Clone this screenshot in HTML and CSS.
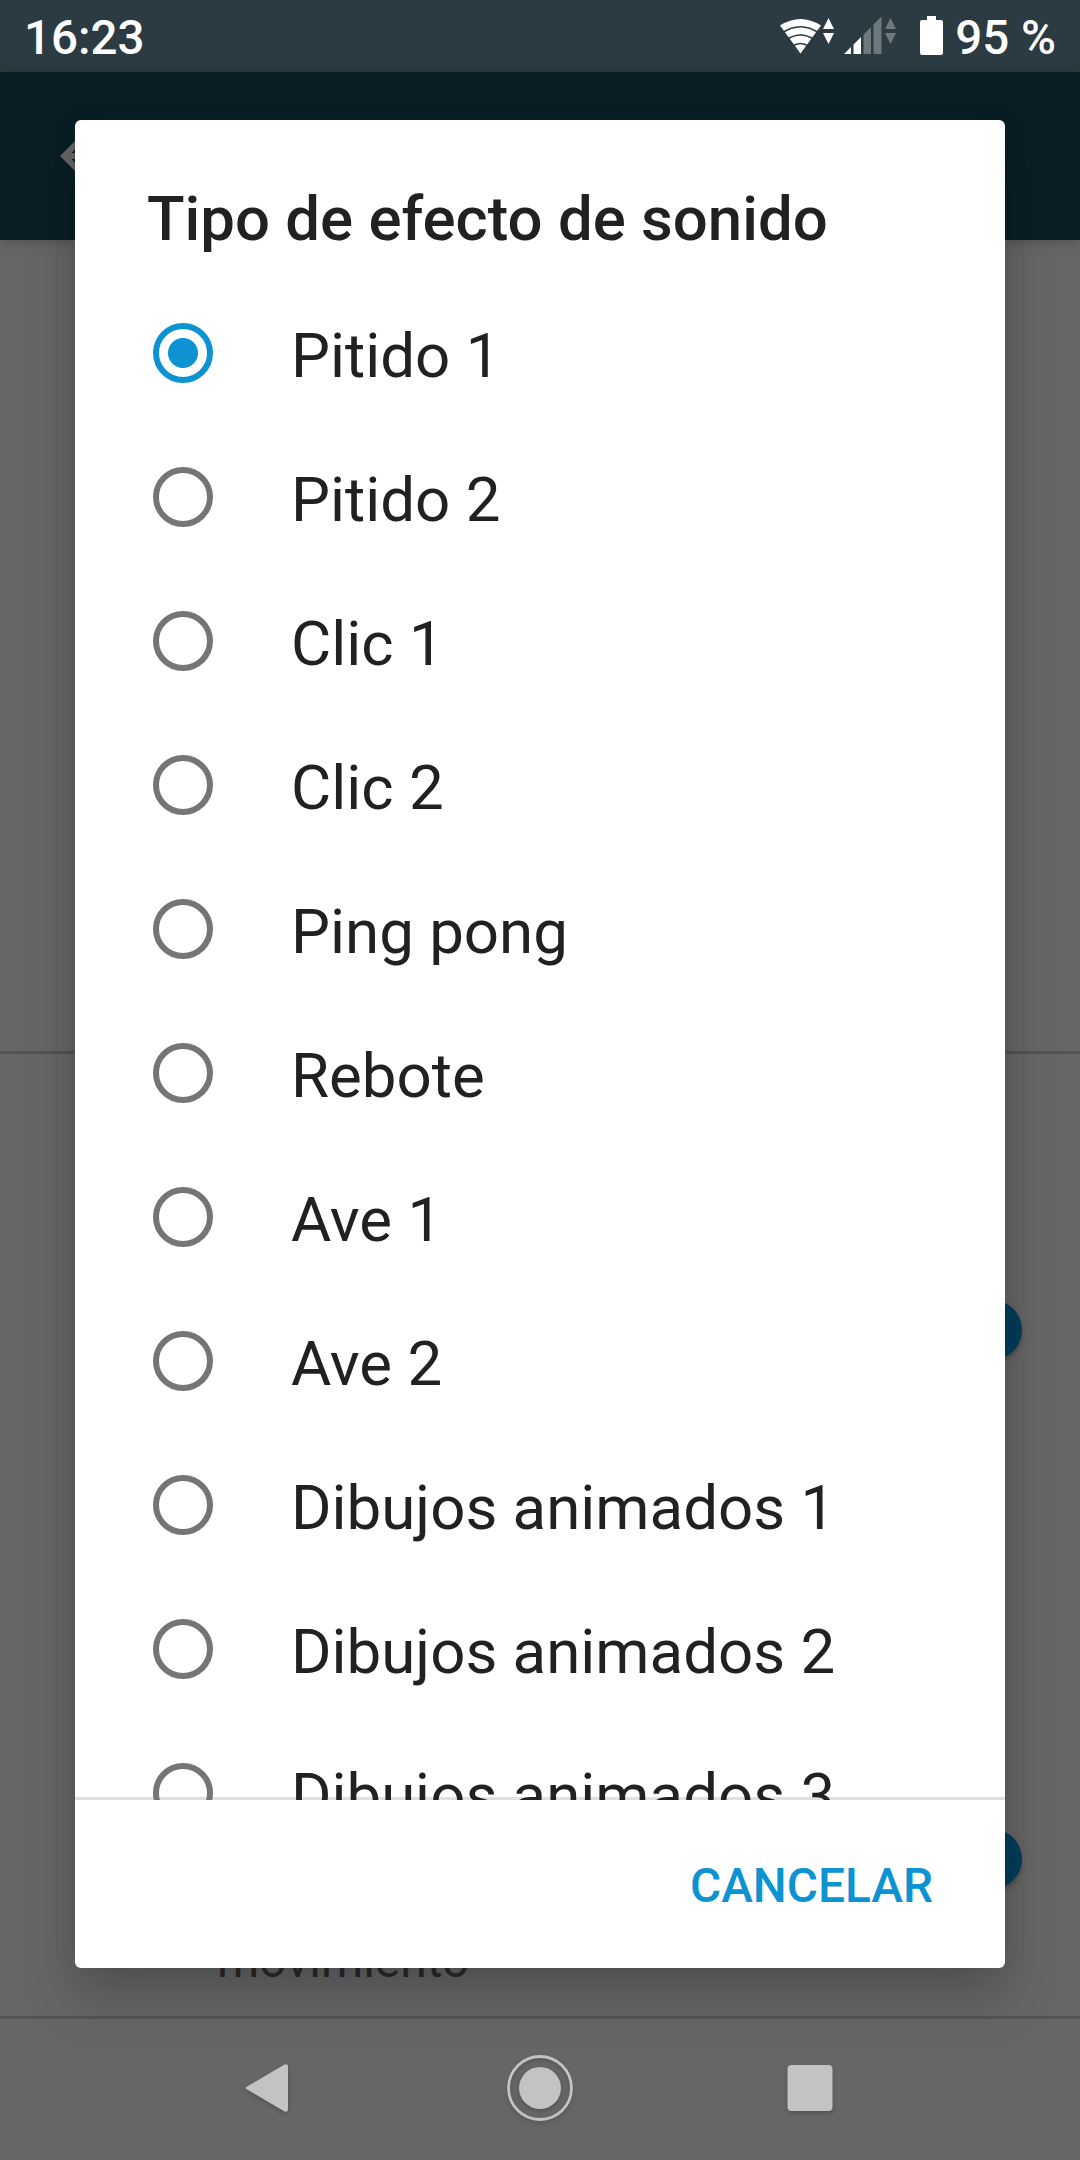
FILE: index.html
```html
<!DOCTYPE html>
<html lang="es">
<head>
<meta charset="utf-8">
<title>Tipo de efecto de sonido</title>
<link rel="stylesheet" href="styles.css">
</head>
<body>
<div class="screen">
  <header class="status">
    <span class="clock">16:23</span>
    <svg class="status-icons" width="164" height="72" viewBox="780 0 164 72">
      <path d="M780 25.500Q800.500 12.500 821 25.500L800.500 53.500Z" fill="#fff"/>
      <g fill="none" stroke="#2b3b41" stroke-width="1.700">
        <path d="M782 33Q800.500 20.500 819 33"/>
        <path d="M787 39.500Q800.500 30.500 814 39.500"/>
        <path d="M792 46.500Q800.500 40.500 809 46.500"/>
      </g>
      <path d="M828.500 18l5.500 11h-11zM828.500 44l5.500-11h-11z" fill="#fff"/>
      <path d="M844 54l7-7v7zM853.500 54v-9.500l7.500-7.500v17z" fill="#fff"/>
      <path d="M863.500 54v-19.500l7.500-7.500v27zM873.500 54v-29.500l8-8v37.500zM890.500 18l5.500 11h-11zM890.500 44l5.500-11h-11z" fill="#6d787c"/>
      <path d="M927 16h9v4h5q2 0 2 2v31q0 2-2 2h-19q-2 0-2-2v-31q0-2 2-2h5z" fill="#fff"/>
    </svg>
    <span class="battery">95 %</span>
  </header>
  <div class="toolbar">
    <svg width="72" height="72" viewBox="0 0 24 24"><path d="M20 11H7.830l5.590-5.590L12 4l-8 8 8 8 1.410-1.410L7.830 13H20z" fill="#666"/></svg>
  </div>
  <main class="settings">
    <section class="group preview"></section>
    <section class="group options">
      <div class="option"><i class="thumb"></i></div>
      <div class="option last"><i class="thumb"></i></div>
      <p class="summary">movimiento</p>
    </section>
  </main>
  <nav class="nav">
    <svg width="1080" height="141" viewBox="0 2019 1080 141" fill="#c3c3c3">
      <path d="M248 2086L284.500 2064.600Q288 2063 288 2067V2109Q288 2113 284.500 2111.400L248 2090Q243.500 2088 248 2086Z"/>
      <circle cx="540" cy="2088" r="21"/>
      <circle cx="540" cy="2088" r="31.500" fill="none" stroke="#c3c3c3" stroke-width="2.800"/>
      <rect x="787.500" y="2065" width="45" height="46" rx="4"/>
    </svg>
  </nav>
  <div class="dialog">
    <h1 class="title">Tipo de efecto de sonido</h1>
    <div class="list">
      <div class="item"><i class="radio on"></i><span>Pitido 1</span></div>
      <div class="item"><i class="radio"></i><span>Pitido 2</span></div>
      <div class="item"><i class="radio"></i><span>Clic 1</span></div>
      <div class="item"><i class="radio"></i><span>Clic 2</span></div>
      <div class="item"><i class="radio"></i><span>Ping pong</span></div>
      <div class="item"><i class="radio"></i><span>Rebote</span></div>
      <div class="item"><i class="radio"></i><span>Ave 1</span></div>
      <div class="item"><i class="radio"></i><span>Ave 2</span></div>
      <div class="item"><i class="radio"></i><span>Dibujos animados 1</span></div>
      <div class="item"><i class="radio"></i><span>Dibujos animados 2</span></div>
      <div class="item"><i class="radio"></i><span>Dibujos animados 3</span></div>
    </div>
    <div class="actions"><span class="cancel">CANCELAR</span></div>
  </div>
</div>
</body>
</html>
```
FILE: styles.css
```css
* { box-sizing: border-box; }
body { margin: 0; font-family: Roboto, sans-serif; }
.screen { position: relative; width: 1080px; height: 2160px; overflow: hidden; display: flex; flex-direction: column; background: #666; }
.status { height: 72px; flex: none; display: flex; align-items: center; padding: 0 24px 0 24px; background: #2b3b41; color: #fff; font-size: 47.5px; font-weight: 500; line-height: 70px; white-space: nowrap; }
.clock, .battery { padding-top: 3px; }
.status-icons { margin-left: auto; margin-right: 11px; }
.toolbar { height: 168px; flex: none; padding: 48px; background: #091f25; box-shadow: 0 2px 12px rgba(0,0,0,.2); }
.settings { height: 1779px; flex: none; display: flex; flex-direction: column; }
.group { border-bottom: 3px solid #545454; }
.preview { height: 814px; }
.options { flex: 1; padding: 246px 58px 0 217px; }
.option { display: flex; justify-content: flex-end; height: 529px; }
.option.last { height: 60px; }
.thumb { width: 60px; height: 60px; border-radius: 50%; background: #003d5c; box-shadow: 0 3px 5px rgba(0,0,0,.25); }
.summary { margin: 42px 0 0; font-size: 48px; line-height: 60px; color: #292929; }
.nav { height: 141px; }
.nav svg { display: block; filter: drop-shadow(0 2px 2px rgba(0,0,0,.2)); }
.dialog { position: absolute; left: 75px; top: 120px; width: 930px; height: 1848px; border-radius: 6px; background: #fff; color: #212121; display: flex; flex-direction: column; box-shadow: 0 28px 56px rgba(0,0,0,.21), 0 0 24px rgba(0,0,0,.08); }
.title { margin: 0; height: 161px; flex: none; padding: 54px 72px 0; font-size: 61.7px; font-weight: 500; line-height: 90px; white-space: nowrap; }
.list { height: 1519px; flex: none; overflow: hidden; padding-left: 78px; background: linear-gradient(#e0e0e0, #e0e0e0) left bottom / 100% 3px no-repeat; }
.item { height: 144px; display: flex; align-items: center; gap: 78px; font-size: 61.8px; line-height: 84px; white-space: nowrap; }
.item span { padding-top: 5px; }
.radio { width: 60px; height: 60px; flex: none; border: 6px solid #757575; border-radius: 50%; }
.radio.on { border-color: #0d93d2; background: radial-gradient(circle, #0d93d2 14.500px, transparent 15.500px); }
.actions { flex: 1; display: flex; justify-content: flex-end; align-items: center; padding-right: 72px; }
.cancel { padding-top: 3px; font-size: 47.8px; font-weight: 500; color: #0d93d2; }
```
